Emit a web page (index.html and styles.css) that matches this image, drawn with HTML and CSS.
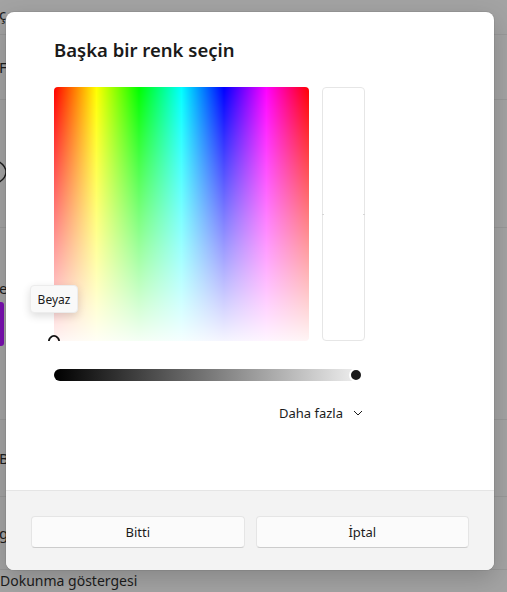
FILE: index.html
```html
<!DOCTYPE html>
<html lang="tr">
<head>
<meta charset="utf-8">
<title>Başka bir renk seçin</title>
<link rel="stylesheet" href="styles.css">
</head>
<body>
<div class="page">
  <div class="bg">
    <div class="row r1"><span class="bgtext">ç</span></div>
    <div class="row r2"><span class="bgtext">Fa</span></div>
    <div class="row r3">
      <svg class="bgicon" width="8" height="28" viewBox="0 0 8 28"><path d="M-4 2 C4 6 6 10 6 14 C6 18 4 22 -4 26" fill="none" stroke="#1c1c1c" stroke-width="1.4"/></svg>
    </div>
    <div class="row r4"><span class="bgtext e">e</span><div class="purple"></div></div>
    <div class="row r5"><span class="bgtext">Bo</span></div>
    <div class="row r6"><span class="bgtext">g</span></div>
    <div class="row r7"><span class="bgtext last">Dokunma göstergesi</span></div>
  </div>

  <div class="dialog">
    <div class="dialog-body">
      <h1 class="title">Başka bir renk seçin</h1>
      <div class="picker">
        <div class="spectrum">
          <div class="ring"></div>
        </div>
        <div class="value"><span class="tick tl"></span><span class="tick tr"></span></div>
      </div>
      <div class="slider"><span class="thumb"></span></div>
      <div class="more">
        <span>Daha fazla</span>
        <svg width="10" height="6" viewBox="0 0 10 6"><path d="M1 1 L5 5 L9 1" fill="none" stroke="#1b1b1b" stroke-width="1"/></svg>
      </div>
    </div>
    <div class="dialog-footer">
      <button class="btn">Bitti</button>
      <button class="btn">İptal</button>
    </div>
  </div>

  <div class="tooltip">Beyaz</div>
</div>
</body>
</html>
```
FILE: styles.css
```css
* { box-sizing: border-box; }
html, body { margin: 0; padding: 0; }
body {
  width: 507px;
  height: 592px;
  overflow: hidden;
  background: #a3a3a3;
  font-family: "Noto Sans", "Segoe UI", sans-serif;
  color: #1b1b1b;
}
.page { position: relative; width: 507px; height: 592px; }

.bg { display: flex; flex-direction: column; height: 592px; }
.row {
  position: relative;
  border-bottom: 1px solid #989898;
  display: flex;
  align-items: center;
  font-size: 15px;
  color: #1c1c1c;
  flex: none;
}
.bgtext { margin-left: -1px; white-space: nowrap; }
.r1 { height: 35px; align-items: flex-start; padding-top: 4px; }
.r2 { height: 65px; }
.r3 { height: 128px; align-items: flex-start; padding-top: 58px; }
.r4 { height: 192px; align-items: flex-start; flex-direction: column; padding-top: 50px; }
.purple { width: 4px; height: 44px; background: #7a0fb0; border-radius: 0 3px 3px 0; margin-top: 4px; }
.r5 { height: 77px; }
.r6 { height: 73px; }
.r7 { height: 22px; border-bottom: none; align-items: center; }
.r7 .last { margin-left: 0; font-size: 14px; line-height: 20px; }

.dialog {
  position: absolute;
  left: 6px;
  top: 12px;
  width: 488px;
  height: 558px;
  background: #ffffff;
  border-radius: 8px;
  overflow: hidden;
  display: flex;
  flex-direction: column;
  box-shadow: 0 8px 24px rgba(0,0,0,0.18), 0 0 0 1px rgba(0,0,0,0.06);
}
.dialog-body {
  height: 478px;
  padding: 24px 0 0 48px;
  display: flex;
  flex-direction: column;
}
.title {
  margin: 0;
  font-size: 18.5px;
  font-weight: 600;
  line-height: 28px;
  color: #1a1a1a;
}
.picker {
  margin-top: 23px;
  display: flex;
  gap: 13px;
}
.spectrum {
  position: relative;
  width: 255px;
  height: 254px;
  border-radius: 4px;
  background:
    linear-gradient(to bottom, rgba(255,255,255,0) 0%, rgba(255,255,255,0.96) 100%),
    linear-gradient(to right, #ff0000 0%, #ffff00 16.67%, #00ff00 33.33%, #00ffff 50%, #0000ff 66.67%, #ff00ff 83.33%, #ff0000 100%);
}
.ring {
  position: absolute;
  left: -6px;
  bottom: -6px;
  width: 12px;
  height: 12px;
  border-radius: 50%;
  border: 2px solid #111;
  border-color: #111 #111 transparent transparent;
  transform: rotate(-45deg);
}
.value {
  position: relative;
  width: 43px;
  height: 254px;
  border: 1px solid #e6e6e6;
  border-radius: 4px;
  background: #fff;
}
.tick { position: absolute; top: 126px; width: 2px; height: 1px; background: #d6d6d6; }
.tl { left: -1px; }
.tr { right: -1px; }

.slider {
  position: relative;
  margin-top: 28px;
  width: 308px;
  height: 12px;
  border-radius: 6px;
  background: linear-gradient(to right, #000 0%, #777 50%, #f2f2f2 100%);
}
.thumb {
  position: absolute;
  right: -1px;
  top: -1px;
  width: 14px;
  height: 14px;
  border-radius: 50%;
  background: #1a1a1a;
  border: 2px solid #fff;
}
.more {
  margin-top: 23px;
  width: 311px;
  display: flex;
  justify-content: flex-end;
  align-items: center;
  gap: 10px;
  font-size: 13px;
  line-height: 18px;
  color: #1b1b1b;
  padding-right: 2px;
}

.dialog-footer {
  flex: 1;
  background: #f3f3f3;
  border-top: 1px solid #e5e5e5;
  padding: 25px 25px 0 25px;
  display: flex;
  gap: 11px;
  align-items: flex-start;
}
.btn {
  flex: 1;
  height: 32px;
  background: #fbfbfb;
  border: 1px solid #e5e5e5;
  border-bottom-color: #cccccc;
  border-radius: 4px;
  font-family: "Noto Sans", "Segoe UI", sans-serif;
  font-size: 13px;
  color: #1b1b1b;
}

.tooltip {
  position: absolute;
  left: 30px;
  top: 285px;
  width: 48px;
  height: 28px;
  display: flex;
  align-items: center;
  justify-content: center;
  background: #f9f9f9;
  border: 1px solid #ececec;
  border-radius: 4px;
  font-size: 12px;
  color: #1b1b1b;
  box-shadow: 0 3px 8px rgba(0,0,0,0.14);
}
```
